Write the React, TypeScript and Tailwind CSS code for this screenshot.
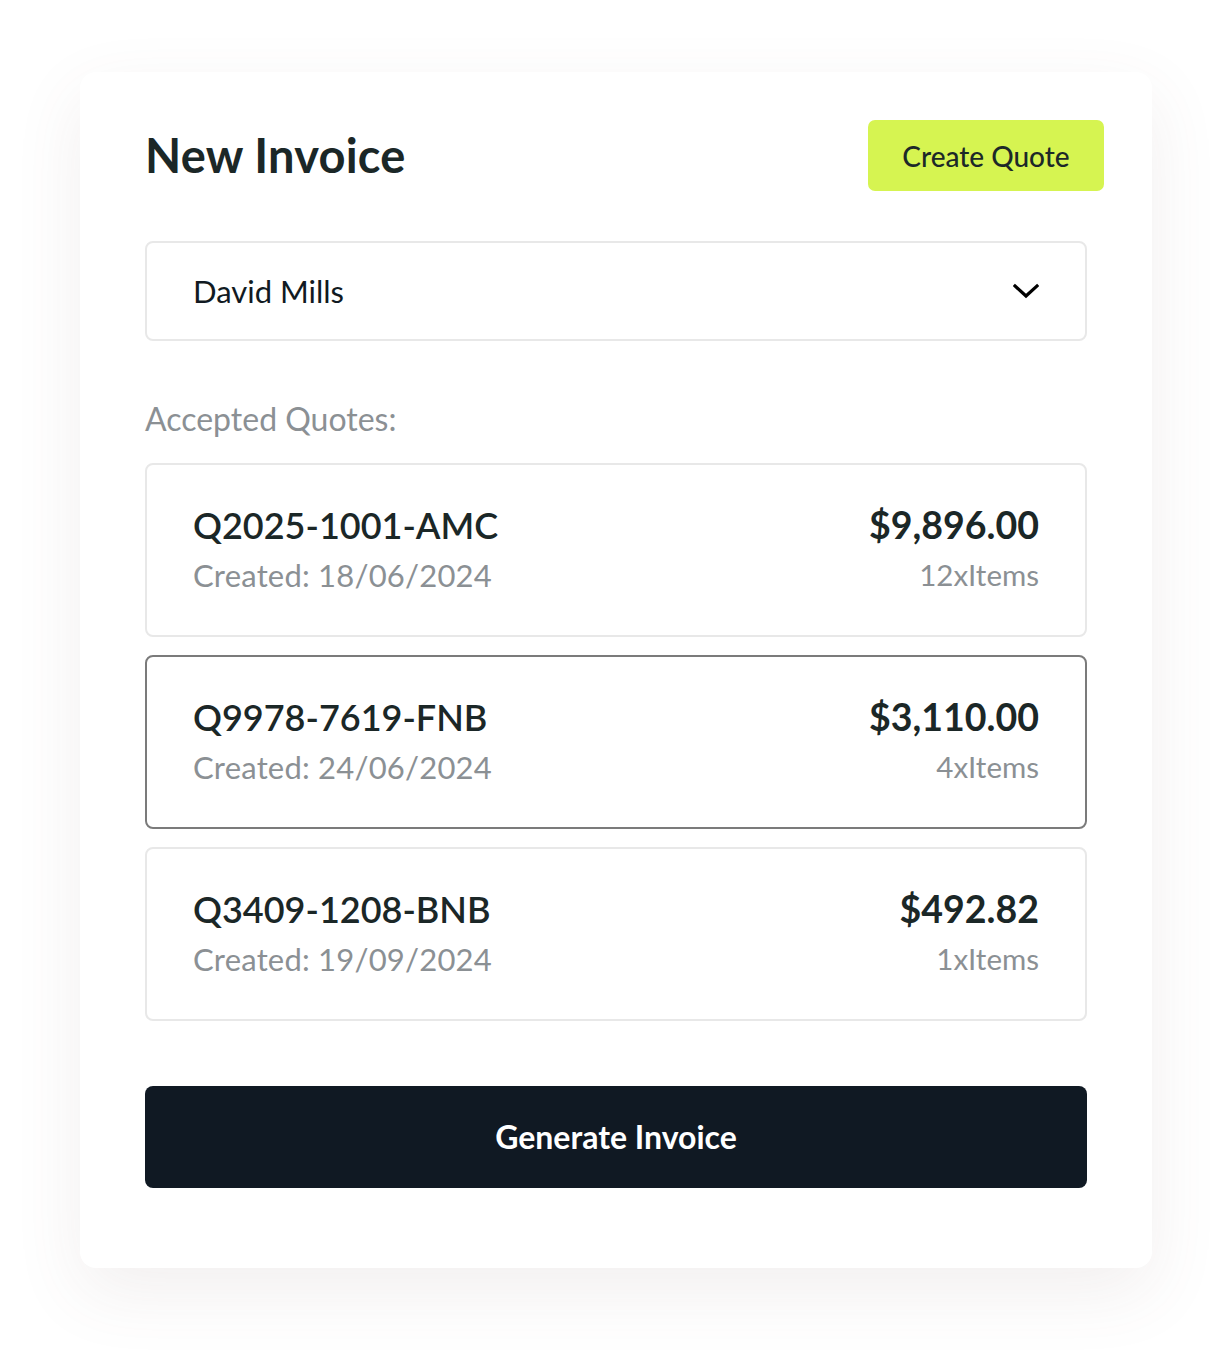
import React, { useState } from 'react';

const quotes = [
    { id: 'Q2025-1001-AMC', created: '18/06/2024', amount: '$9,896.00', items: 12 },
    { id: 'Q9978-7619-FNB', created: '24/06/2024', amount: '$3,110.00', items: 4 },
    { id: 'Q3409-1208-BNB', created: '19/09/2024', amount: '$492.82', items: 1 },
];

const App = () => {
    const [selected, setSelected] = useState('Q9978-7619-FNB');

    return (
        <div className="min-h-[1356px] bg-white pt-[72px] px-[80px] font-['Lato',sans-serif] text-[#1b2727]">
            <div className="w-[1072px] h-[1196px] rounded-[16px] bg-white shadow-[0_24px_70px_rgba(110,80,80,0.09)] pt-[48px] pl-[65px] pr-[65px]">
                {/* Header */}
                <div className="flex items-center justify-between -mr-[17px]">
                    <h1 className="text-[47px] font-bold leading-none tracking-[0.2px]">New Invoice</h1>
                    <button className="h-[71px] w-[236px] rounded-[7px] bg-[#d6f451] text-[28px] font-medium text-[#1c2828]">
                        Create Quote
                    </button>
                </div>

                {/* Customer select */}
                <div className="mt-[50px] h-[100px] rounded-[8px] border-2 border-[#e8e8e8] flex items-center justify-between pl-[46px] pr-[46px]">
                    <span className="text-[31px] text-[#111a22]">David Mills</span>
                    <svg width="26" height="16" viewBox="0 0 26 16" fill="none">
                        <polyline points="2,3 13,13 24,3" stroke="#000" strokeWidth="3.2" strokeLinecap="square" />
                    </svg>
                </div>

                <p className="mt-[60px] text-[32px] leading-[36px] text-[#8b9094]">Accepted Quotes:</p>

                {/* Quotes */}
                <div className="mt-[26px] flex flex-col gap-[18px]">
                    {quotes.map((q) => (
                        <div
                            key={q.id}
                            onClick={() => setSelected(q.id)}
                            className={`h-[174px] rounded-[8px] border-2 flex items-center justify-between px-[46px] pb-[4px] cursor-pointer ${selected === q.id ? 'border-[#7b7b7b]' : 'border-[#e8e8e8]'}`}
                        >
                            <div className="flex flex-col">
                                <span className="text-[36px] font-semibold leading-[44px]">{q.id}</span>
                                <span className="mt-[10px] text-[31px] leading-[36px] tracking-[0.2px] text-[#8b9094]">Created: {q.created}</span>
                            </div>
                            <div className="flex flex-col items-end">
                                <span className="text-[37.5px] font-bold leading-[44px]">{q.amount}</span>
                                <span className="mt-[10px] text-[29.5px] leading-[36px] text-[#8b9094]">{q.items}xItems</span>
                            </div>
                        </div>
                    ))}
                </div>

                <button className="mt-[65px] w-full h-[102px] rounded-[8px] bg-[#101923] text-white text-[32px] font-bold">
                    Generate Invoice
                </button>
            </div>
        </div>
    );
};

export default App;
